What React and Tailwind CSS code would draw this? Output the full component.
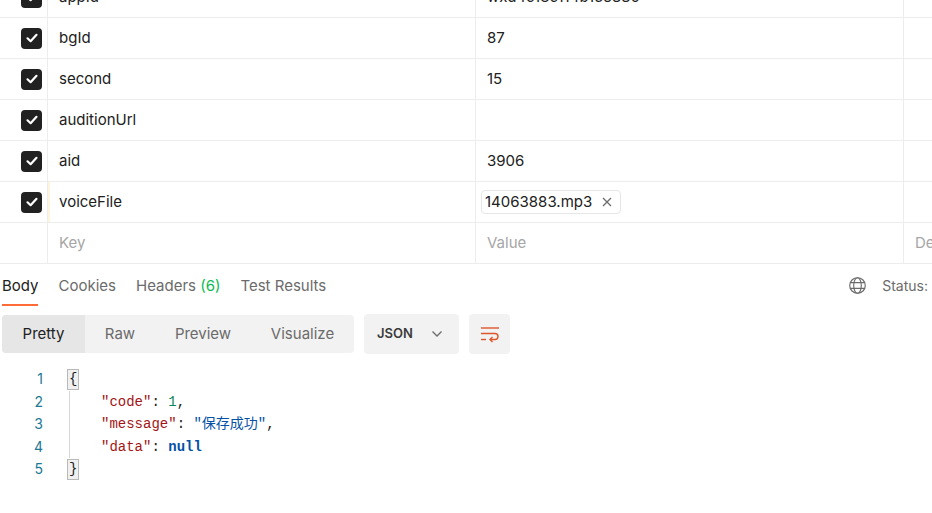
import React from 'react'

const rows = [
  { key: 'appId', value: 'wxd4c18c114b1e5330', checked: true },
  { key: 'bgId', value: '87', checked: true },
  { key: 'second', value: '15', checked: true },
  { key: 'auditionUrl', value: '', checked: true },
  { key: 'aid', value: '3906', checked: true },
  { key: 'voiceFile', file: '14063883.mp3', checked: true, active: true },
];

const Checkbox = () => (
  <span className="flex h-[21px] w-[21px] items-center justify-center rounded-[4px] bg-[#212121]">
    <svg width="14" height="14" viewBox="0 0 14 14" fill="none">
      <path d="M2.5 7.3 L5.6 10.2 L11.5 3.8" stroke="#fff" strokeWidth="2.2" strokeLinecap="round" strokeLinejoin="round" />
    </svg>
  </span>
);

const Row = ({ row }) => (
  <div className="flex h-[41px] border-b border-[#ededed]">
    <div className="flex w-[48px] shrink-0 items-center justify-end border-r border-[#ededed] pr-[5px]">
      {row.checked && <Checkbox />}
    </div>
    <div className={`flex w-[428px] shrink-0 items-center border-r border-[#ededed] pl-[11px] ${row.active ? 'shadow-[inset_2px_0_0_#fdf6dc]' : ''}`}>
      {row.key}
    </div>
    <div className="flex w-[428px] shrink-0 items-center border-r border-[#ededed] pl-[11px]">
      {row.file ? (
        <span className="-ml-[6px] flex h-[24px] items-center gap-[10px] rounded-[4px] border border-[#e6e6e6] pl-[3px] pr-[8px]">
          {row.file}
          <svg width="10" height="10" viewBox="0 0 10 10">
            <path d="M1 1 L9 9 M9 1 L1 9" stroke="#6b6b6b" strokeWidth="1.3" />
          </svg>
        </span>
      ) : row.value}
    </div>
    <div className="flex-1" />
  </div>
);

const Tok = ({ c, children, bold }) => (
  <span className={`${c} ${bold ? 'font-bold' : ''}`}>{children}</span>
);

export default function App() {
  return (
    <div className="h-[513px] w-[932px] overflow-hidden bg-white text-[15px] text-[#212121]" style={{ fontFamily: 'Inter, "Noto Sans", sans-serif' }}>
      <div className="-mt-[23px]">
        {rows.map((r) => <Row key={r.key} row={r} />)}
        <div className="flex h-[41px] border-b border-[#ededed] text-[#a6a6a6]">
          <div className="w-[48px] shrink-0 border-r border-[#ededed]" />
          <div className="flex w-[428px] shrink-0 items-center border-r border-[#ededed] pl-[11px]">Key</div>
          <div className="flex w-[428px] shrink-0 items-center border-r border-[#ededed] pl-[11px]">Value</div>
          <div className="flex min-w-0 flex-1 items-center overflow-hidden whitespace-nowrap pl-[11px]">De</div>
        </div>
      </div>

      <div className="flex h-[40px] items-start justify-between pt-[11px]">
        <div className="flex gap-[20px] pl-[2px] text-[#6b6b6b]">
          <div className="flex flex-col">
            <span className="text-[#212121]">Body</span>
            <span className="mt-[6px] h-[2px] w-[36px] bg-[#ff6c37]" />
          </div>
          <span>Cookies</span>
          <span>Headers <span className="text-[#0cbb52]">(6)</span></span>
          <span>Test Results</span>
        </div>
        <div className="flex items-center gap-[15px] whitespace-nowrap pr-[4px] text-[14px] text-[#6b6b6b]">
          <svg width="19" height="19" viewBox="0 0 20 20" fill="none" stroke="#6b6b6b" strokeWidth="1.2">
            <circle cx="10" cy="10" r="8.2" />
            <ellipse cx="10" cy="10" rx="4" ry="8.2" />
            <path d="M2 7 H18 M2 13 H18" />
          </svg>
          <span>Status:</span>
        </div>
      </div>

      <div className="mt-[10px] flex items-center gap-[10px] pl-[2px]">
        <div className="flex h-[38px] w-[352px] items-stretch overflow-hidden rounded-[4px] bg-[#f2f2f2] text-[#6b6b6b]">
          <span className="flex w-[83px] items-center justify-center bg-[#e6e6e6] text-[#212121]">Pretty</span>
          <span className="flex w-[70px] items-center justify-center">Raw</span>
          <span className="flex w-[96px] items-center justify-center">Preview</span>
          <span className="flex w-[103px] items-center justify-center">Visualize</span>
        </div>
        <div className="flex h-[40px] w-[95px] items-center justify-between rounded-[4px] bg-[#f2f2f2] pl-[13px] pr-[16px]">
          <span className="text-[13px] font-semibold text-[#3b3b3b]">JSON</span>
          <svg width="12" height="8" viewBox="0 0 12 8" fill="none">
            <path d="M1.5 1.5 L6 6 L10.5 1.5" stroke="#6b6b6b" strokeWidth="1.3" />
          </svg>
        </div>
        <div className="flex h-[40px] w-[41px] items-center justify-center rounded-[4px] bg-[#f2f2f2]">
          <svg width="20" height="18" viewBox="0 0 20 18" fill="none" stroke="#e0552b" strokeWidth="1.4">
            <path d="M1 3 H19" />
            <path d="M1 8.5 H15 a3 3 0 0 1 0 6 H10" />
            <path d="M12.5 12 L10 14.5 L12.5 17" />
            <path d="M1 14.5 H6" />
          </svg>
        </div>
      </div>

      <div className="mt-[14px] flex text-[14px] leading-[22.5px]" style={{ fontFamily: '"Liberation Mono", "DejaVu Sans Mono", "Noto Sans CJK SC", monospace' }}>
        <div className="w-[44px] shrink-0 pr-[1px] text-right text-[#237893]" style={{ fontFamily: 'Inter, sans-serif' }}>
          <div>1</div><div>2</div><div>3</div><div>4</div><div>5</div>
        </div>
        <div className="relative ml-[23px]">
          <div><span className="inline-block border border-[#b9b9b9] bg-[#f0f0f0] px-[1px] leading-[19px]">{'{'}</span></div>
          <div className="ml-[2px] border-l border-[#d6d6d6] pl-[31px]">
            <div><Tok c="text-[#a31515]">"code"</Tok>: <Tok c="text-[#098658]">1</Tok>,</div>
            <div><Tok c="text-[#a31515]">"message"</Tok>: <Tok c="text-[#0451a5]">"保存成功"</Tok>,</div>
            <div><Tok c="text-[#a31515]">"data"</Tok>: <Tok c="text-[#0451a5]" bold>null</Tok></div>
          </div>
          <div><span className="inline-block border border-[#b9b9b9] bg-[#f0f0f0] px-[1px] leading-[19px]">{'}'}</span></div>
        </div>
      </div>
    </div>
  );
}
